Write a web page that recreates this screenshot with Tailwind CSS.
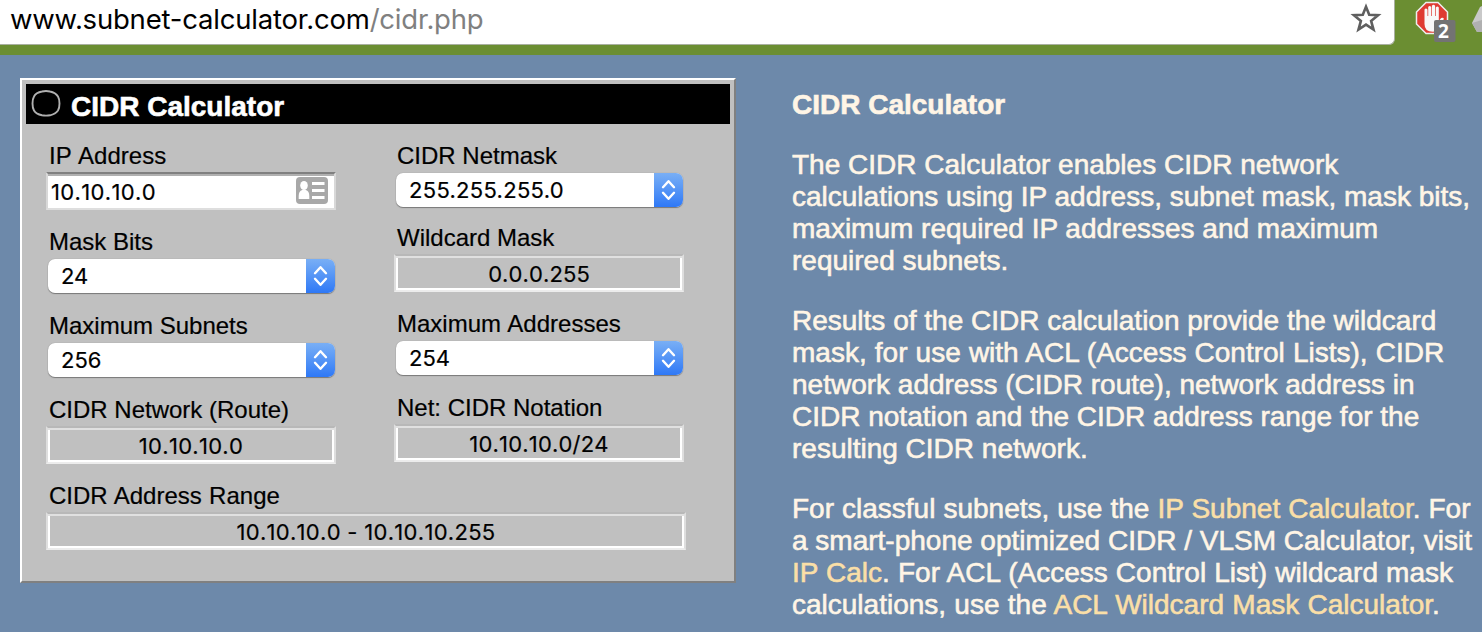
<!DOCTYPE html>
<html lang="en">
<head>
<meta charset="utf-8">
<title>CIDR Calculator</title>
<script src="https://cdn.jsdelivr.net/npm/@tailwindcss/browser@4"></script>
</head>
<body class="w-[1482px] h-[632px] overflow-hidden bg-[#6d89aa] font-['Liberation_Sans',Arial,sans-serif] text-black">
<svg class="hidden">
  <symbol id="stepper" viewBox="0 0 29 34"><path d="M9 14.200 14.500 8.200 20 14.200M9 19.800 14.500 25.800 20 19.800" fill="none" stroke="#fff" stroke-width="2.400" stroke-linecap="round" stroke-linejoin="round"/></symbol>
</svg>
<header class="flex h-[55px] items-start bg-[#6b8e32]">
  <div class="flex h-[45px] w-[1395px] items-start justify-between rounded-br-md border-r border-b border-[#a9b0a0] bg-white pl-[10px]">
    <div class="font-[Inter,sans-serif] text-[27.5px] leading-[38px] tracking-[-0.2px] whitespace-nowrap">www.subnet-calculator.com<span class="text-[#808080]">/cidr.php</span></div>
    <svg class="mt-[2px] mr-3 size-8" viewBox="0 0 32 32"><path d="M16 4.800 19.200 12.800 28.100 13.200 21.100 18.900 23.500 27.600 16 22.600 8.500 27.600 10.900 18.900 3.900 13.200 12.800 12.800Z" fill="none" stroke="#5f5f5f" stroke-width="2.600"/></svg>
  </div>
  <svg class="h-[50px] w-[87px]" viewBox="1395 0 87 50">
    <path d="M1426 2.500h12l9.500 9.500v12l-9.500 9.500h-12l-9.500-9.500v-12z" fill="#df3b32" stroke="#eee" stroke-width="1.500"/>
    <path d="M1424.500 18v-8.500q1.400-2 3 0V16h.7V7q1.500-2 3 0v9h.7V5.800q1.600-2 3.200 0V16h.7V7.500q1.500-2 3 0V21l2.300-3q2.800-.6 2.700 1l-5.500 9.500q-1.600 3.300-5.500 3.300-8.300 0-8.300-7.800z" fill="#f8f8f8"/>
    <rect x="1434" y="20" width="21.500" height="22" rx="2" fill="#737373"/>
    <text x="1443.500" y="38" text-anchor="middle" font-family="Open Sans" font-size="19" font-weight="700" fill="#fff">2</text>
    <path d="M1472 23 1480 7 1482 6V32H1477Z" fill="#c9c9c9"/><path d="M1472 23 1482 20V32H1477Z" fill="#b0b0b0"/>
  </svg>
</header>
<main class="flex items-start pl-5">
  <section class="mt-[23px] h-[505px] w-[716px] border-2 border-t-white border-r-[#808080] border-b-[#808080] border-l-white bg-[#c0c0c0] p-1">
    <h1 class="flex h-10 items-center bg-black pl-[5px] text-[28px] font-bold text-white">
      <svg class="h-8 w-[32px]" viewBox="0 0 32 32"><path d="M11 3.500Q15 2.500 19 3.500 24.500 4.500 27 8.500 28.500 11 28.500 15.500T27 22.500Q24.500 26 19 27.300 15 28 11 27.300 5 26 3 22.500 1.500 20 1.500 15.500T3 8.500Q5 4.500 11 3.500z" fill="none" stroke="#b0b0b0" stroke-width="1.900"/></svg>
      <span class="ml-2 mt-[6px] [-webkit-text-stroke:0.6px]">CIDR Calculator</span>
    </h1>
    <div class="flex gap-[58px] pt-[18px] pl-5 text-2xl [-webkit-text-stroke:0.2px]">
      <div class="w-[290px] shrink-0">
        <div class="h-[30px] pl-[3px] leading-7 [word-spacing:1.5px]">IP Address</div>
        <div class="flex h-[38px] justify-between border-2 border-t-[#808080] border-r-[#d8d8d8] border-b-[#dedede] border-l-[#d8d8d8] bg-white pr-[6px] pl-[3px] shadow-[inset_0_2px_0_#b0b0b0]">
          <span class="font-[Inter,sans-serif] text-[22px] leading-9 tracking-[0.35px] [font-kerning:none]">10.10.10.0</span>
          <svg class="mt-[3px] h-[27px] w-8" viewBox="0 0 32 27"><rect width="32" height="27" rx="4" fill="#a8a8a8"/><ellipse cx="8" cy="8.500" rx="3.800" ry="4.500" fill="#fff"/><path d="M2.700 22v-3q0-5 3.500-6h3.600q3.500 1 3.500 6v3zM16 5h12.500v3H16zM16 12h12.500v3H16zM16 19h12.500v3H16z" fill="#fff"/></svg>
        </div>
        <div class="mt-[18px] h-[31px] pl-[3px] leading-7">Mask Bits</div>
        <div class="ml-0.5 flex h-[34px] w-[287px] overflow-hidden rounded-[7px] bg-white shadow-[0_0_1px_#888,0_1px_1px_#777]"><span class="grow pl-[13px] font-[Inter,sans-serif] text-[22px] leading-[34px]">24</span><svg class="h-[34px] w-[29px] bg-linear-to-b from-[#79aff5] to-[#2e78f6]"><use href="#stepper"/></svg></div>
        <div class="mt-[19px] h-[31px] pl-[3px] leading-7">Maximum Subnets</div>
        <div class="ml-0.5 flex h-[34px] w-[287px] overflow-hidden rounded-[7px] bg-white shadow-[0_0_1px_#888,0_1px_1px_#777]"><span class="grow pl-[13px] font-[Inter,sans-serif] text-[22px] leading-[34px]">256</span><svg class="h-[34px] w-[29px] bg-linear-to-b from-[#79aff5] to-[#2e78f6]"><use href="#stepper"/></svg></div>
        <div class="mt-[19px] h-[30px] pl-[3px] leading-7 whitespace-nowrap">CIDR Network (Route)</div>
        <div class="h-[38px] border-2 border-t-[#b8b8b8] border-r-[#dedede] border-b-[#ececec] border-l-[#dedede] text-center font-[Inter,sans-serif] text-[22px] leading-9 tracking-[0.3px] shadow-[inset_0_2px_0_#e0e0e0,inset_0_0_0_2px_#fff] [font-kerning:none]">10.10.10.0</div>
        <div class="mt-[18px] h-[30px] pl-[3px] leading-7 [word-spacing:0.7px]">CIDR Address Range</div>
        <div class="h-[38px] w-[640px] border-2 border-t-[#b8b8b8] border-r-[#dedede] border-b-[#ececec] border-l-[#dedede] text-center font-[Inter,sans-serif] text-[22px] leading-9 tracking-[0.3px] shadow-[inset_0_2px_0_#e0e0e0,inset_0_0_0_2px_#fff] [font-kerning:none]">10.10.10.0 - 10.10.10.255</div>
      </div>
      <div class="w-[290px] shrink-0">
        <div class="h-[31px] pl-[3px] leading-7">CIDR Netmask</div>
        <div class="ml-0.5 flex h-[34px] w-[287px] overflow-hidden rounded-[7px] bg-white shadow-[0_0_1px_#888,0_1px_1px_#777]"><span class="grow pl-[13px] font-[Inter,sans-serif] text-[22px] leading-[34px] tracking-[0.3px]">255.255.255.0</span><svg class="h-[34px] w-[29px] bg-linear-to-b from-[#79aff5] to-[#2e78f6]"><use href="#stepper"/></svg></div>
        <div class="mt-[17px] h-[30px] pl-[3px] leading-7">Wildcard Mask</div>
        <div class="h-[38px] border-2 border-t-[#b8b8b8] border-r-[#dedede] border-b-[#ececec] border-l-[#dedede] text-center font-[Inter,sans-serif] text-[22px] leading-9 tracking-[0.1px] shadow-[inset_0_2px_0_#e0e0e0,inset_0_0_0_2px_#fff] [font-kerning:none]">0.0.0.255</div>
        <div class="mt-[18px] h-[31px] pl-[3px] leading-7 [word-spacing:1px]">Maximum Addresses</div>
        <div class="ml-0.5 flex h-[34px] w-[287px] overflow-hidden rounded-[7px] bg-white shadow-[0_0_1px_#888,0_1px_1px_#777]"><span class="grow pl-[13px] font-[Inter,sans-serif] text-[22px] leading-[34px]">254</span><svg class="h-[34px] w-[29px] bg-linear-to-b from-[#79aff5] to-[#2e78f6]"><use href="#stepper"/></svg></div>
        <div class="mt-[19px] h-[30px] pl-[3px] leading-7">Net: CIDR Notation</div>
        <div class="h-[38px] border-2 border-t-[#b8b8b8] border-r-[#dedede] border-b-[#ececec] border-l-[#dedede] text-center font-[Inter,sans-serif] text-[22px] leading-9 tracking-[0.2px] shadow-[inset_0_2px_0_#e0e0e0,inset_0_0_0_2px_#fff] [font-kerning:none]">10.10.10.0/24</div>
      </div>
    </div>
  </section>
  <article class="ml-14 flex flex-col gap-7 pt-[34px] text-[28px] leading-8 whitespace-nowrap text-[#fff5e6] [-webkit-text-stroke:0.6px]">
    <h2 class="font-bold">CIDR Calculator</h2>
    <p>The CIDR Calculator enables CIDR network<br>calculations using IP address, subnet mask, mask bits,<br>maximum required IP addresses and maximum<br>required subnets.</p>
    <p>Results of the CIDR calculation provide the wildcard<br><span class="[word-spacing:0.35px]">mask, for use with ACL (Access Control Lists), CIDR</span><br>network address (CIDR route), network address in<br>CIDR notation and the CIDR address range for the<br>resulting CIDR network.</p>
    <p><span class="[word-spacing:0.25px]">For classful subnets, use the <a class="text-[#fadfa7]">IP Subnet Calculator</a>. For</span><br>a smart-phone optimized CIDR / VLSM Calculator, visit<br><span class="[word-spacing:0.35px]"><a class="text-[#fadfa7]">IP Calc</a>. For ACL (Access Control List) wildcard mask</span><br><span class="[word-spacing:0.5px]">calculations, use the <a class="text-[#fadfa7]">ACL Wildcard Mask Calculator</a>.</span></p>
  </article>
</main>
</body>
</html>
